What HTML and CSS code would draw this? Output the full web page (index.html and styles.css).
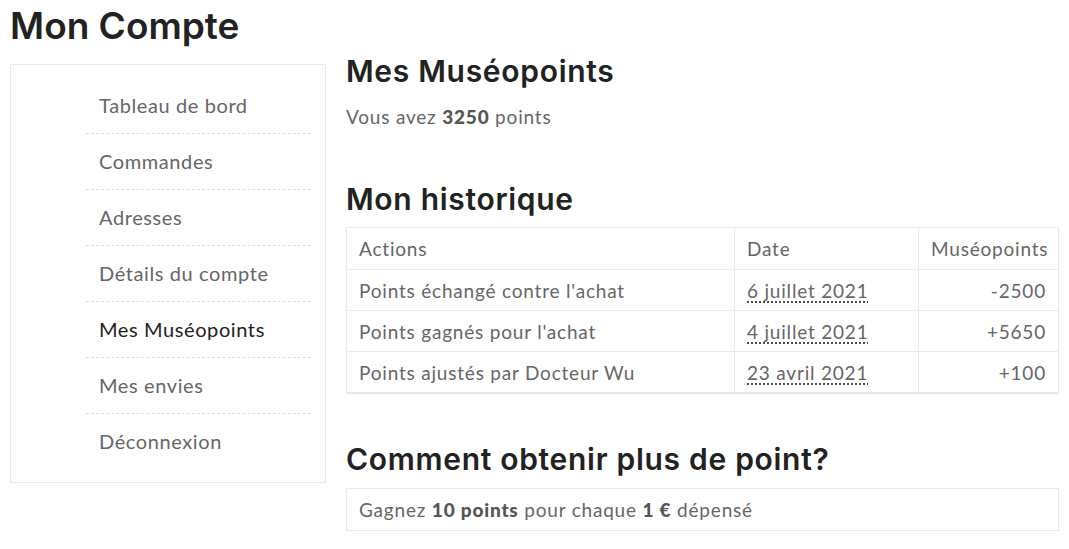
FILE: index.html
```html
<!DOCTYPE html>
<html lang="fr">

<head>
    <meta charset="UTF-8">
    <meta name="viewport" content="width=device-width, initial-scale=1.0">
    <title>Mon Compte</title>
    <link rel="stylesheet" href="styles.css">
</head>

<body>
    <h1 class="page-title">Mon Compte</h1>

    <div class="account">
        <!-- menu du compte -->
        <nav class="account-nav">
            <ul>
                <li><a href="#">Tableau de bord</a></li>
                <li><a href="#">Commandes</a></li>
                <li><a href="#">Adresses</a></li>
                <li><a href="#">Détails du compte</a></li>
                <li class="active"><a href="#">Mes Muséopoints</a></li>
                <li><a href="#">Mes envies</a></li>
                <li><a href="#">Déconnexion</a></li>
            </ul>
        </nav>

        <div class="account-content">
            <h2 class="points-title">Mes Muséopoints</h2>
            <p class="balance">Vous avez <strong>3250</strong> points</p>

            <h2 class="history-title">Mon historique</h2>
            <table class="history">
                <thead>
                    <tr>
                        <th>Actions</th>
                        <th class="col-date">Date</th>
                        <th class="col-points">Muséopoints</th>
                    </tr>
                </thead>
                <tbody>
                    <tr>
                        <td>Points échangé contre l'achat</td>
                        <td class="col-date"><abbr title="2021-07-06">6 juillet 2021</abbr></td>
                        <td class="col-points">-2500</td>
                    </tr>
                    <tr>
                        <td>Points gagnés pour l'achat</td>
                        <td class="col-date"><abbr title="2021-07-04">4 juillet 2021</abbr></td>
                        <td class="col-points">+5650</td>
                    </tr>
                    <tr>
                        <td>Points ajustés par Docteur Wu</td>
                        <td class="col-date"><abbr title="2021-04-23">23 avril 2021</abbr></td>
                        <td class="col-points">+100</td>
                    </tr>
                </tbody>
            </table>

            <h2 class="more-title">Comment obtenir plus de point?</h2>
            <div class="info-box">
                Gagnez <strong>10 points</strong> pour chaque <strong>1 €</strong> dépensé
            </div>
        </div>
    </div>
</body>

</html>
```

FILE: styles.css
```css
body {
    margin: 0;
    padding: 0 10px;
    font-family: Lato, "Noto Sans", sans-serif;
    font-size: 19px;
    letter-spacing: 0.8px;
    color: #666;
    background: #fff;
}

h1,
h2 {
    font-family: Inter, Roboto, sans-serif;
    font-weight: 600;
    color: #222;
    margin: 0;
}

.page-title {
    font-size: 37px;
    line-height: 52px;
    margin-bottom: 12px;
    letter-spacing: 0;
}

.account {
    display: grid;
    grid-template-columns: 316px 1fr;
    column-gap: 20px;
}

/* menu de gauche */
.account-nav {
    border: 1px solid #e8e8e8;
    padding: 13px 14px 13px 75px;
    align-self: start;
}

.account-nav ul {
    list-style: none;
    margin: 0;
    padding: 0;
}

.account-nav li {
    border-bottom: 1px dashed #dcdcdc;
}

.account-nav li:last-child {
    border-bottom: none;
}

.account-nav a {
    display: block;
    padding: 0 13px;
    line-height: 55px;
    font-size: 20px;
    letter-spacing: 0.6px;
    color: #666;
    text-decoration: none;
}

.account-nav li.active a {
    color: #222;
}

/* contenu */
.account-content h2 {
    font-size: 30px;
    line-height: 40px;
    letter-spacing: 0.7px;
}

.account-content .points-title {
    margin-top: -13px;
}

.balance {
    margin: 14px 0 0;
    line-height: 24px;
}

.balance strong,
.info-box strong {
    color: #555;
    font-weight: 900;
}

.account-content .history-title {
    margin-top: 50px;
    margin-bottom: 8px;
}

.history {
    width: 100%;
    table-layout: fixed;
    border-collapse: collapse;
    border: 1px solid #e8e8e8;
    box-shadow: 0 1px 1px #e8e8e8;
}

.history th,
.history td {
    text-align: left;
    font-weight: 400;
    padding: 0 12px;
    height: 40px;
    border-top: 1px solid #ebebeb;
    border-left: 1px solid #ebebeb;
}

.history th {
    height: 41px;
}

.history th:first-child,
.history td:first-child {
    border-left: none;
}

.history .col-date {
    width: 159px;
}

.history .col-points {
    width: 115px;
    text-align: right;
}

.history abbr {
    text-decoration: underline dotted #444;
    text-underline-offset: 4px;
}

.account-content .more-title {
    margin-top: 46px;
    margin-bottom: 9px;
}

.info-box {
    border: 1px solid #e8e8e8;
    box-shadow: 0 1px 1px #e8e8e8;
    padding: 0 12px;
    line-height: 41px;
}
```
